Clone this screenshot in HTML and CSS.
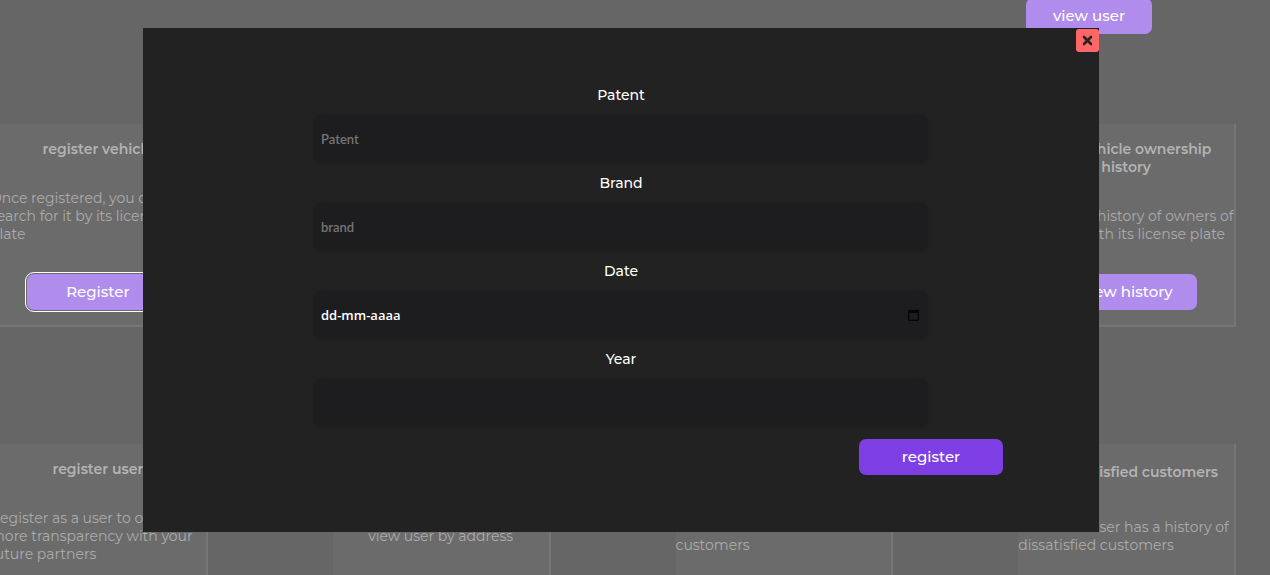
FILE: index.html
```html
<!DOCTYPE html>
<html lang="en">
<head>
<meta charset="utf-8">
<title>Vehicle register</title>
<link rel="stylesheet" href="styles.css">
</head>
<body>
<main class="page">
  <div class="top-actions">
    <button class="btn btn-faded btn-narrow" type="button">view user</button>
  </div>
  <section class="cards">
    <article class="card">
      <h2 class="card-title">register vehicle</h2>
      <p class="card-text card-text-wide">Once registered, you can<br>search for it by its license<br>plate</p>
      <button class="btn btn-faded btn-focused" type="button">Register</button>
    </article>
    <article class="card card-hidden"></article>
    <article class="card card-hidden"></article>
    <article class="card">
      <h2 class="card-title">View vehicle ownership<br>history</h2>
      <p class="card-text">Search the history of owners of a vehicle with its license plate</p>
      <button class="btn btn-faded" type="button">View history</button>
    </article>
  </section>
  <section class="cards">
    <article class="card">
      <h2 class="card-title">register user</h2>
      <p class="card-text">Register as a user to offer more transparency with your future partners</p>
      <button class="btn btn-faded" type="button">Register</button>
    </article>
    <article class="card">
      <h2 class="card-title">view user</h2>
      <p class="card-text">view user by address</p>
      <button class="btn btn-faded" type="button">view user</button>
    </article>
    <article class="card">
      <h2 class="card-title">satisfied customers</h2>
      <p class="card-text">View a user's list of satisfied customers</p>
      <button class="btn btn-faded" type="button">View</button>
    </article>
    <article class="card">
      <h2 class="card-title">All dissatisfied customers</h2>
      <p class="card-text">Check if a user has a history of dissatisfied customers</p>
      <button class="btn btn-faded" type="button">View</button>
    </article>
  </section>
</main>

<div class="overlay">
  <div class="modal" role="dialog" aria-label="Register vehicle">
    <button class="close" type="button" aria-label="Close">
      <svg width="11" height="11" viewBox="0 0 11 11" aria-hidden="true"><path d="M2 2 9 9M9 2 2 9" stroke="#222" stroke-width="2.6" stroke-linecap="round"/></svg>
    </button>
    <form class="form">
      <div class="field">
        <label for="patent">Patent</label>
        <input id="patent" type="text" placeholder="Patent">
      </div>
      <div class="field">
        <label for="brand">Brand</label>
        <input id="brand" type="text" placeholder="brand">
      </div>
      <div class="field">
        <label for="date">Date</label>
        <div class="date-box">
          <input id="date" class="date-input" type="text" placeholder="dd-mm-aaaa">
          <button class="date-button" type="button" aria-label="Choose date">
            <svg width="11" height="12" viewBox="0 0 11 12" aria-hidden="true"><path d="M0 2Q0 1 1 1H2V0H3V1H8V0H9V1H10Q11 1 11 2V11Q11 12 10 12H1Q0 12 0 11ZM1.3 4V10.7H9.7V4Z" fill="#050505" fill-rule="evenodd"/></svg>
          </button>
        </div>
      </div>
      <div class="field">
        <label for="year">Year</label>
        <input id="year" type="text">
      </div>
      <button class="btn submit" type="button">register</button>
    </form>
  </div>
</div>
</body>
</html>
```
FILE: styles.css
```css
* { box-sizing: border-box; }

body {
  margin: 0;
  overflow: hidden;
  background: #666;
  color: #fff;
  font: 14px/18px Montserrat, Inter, sans-serif;
}

.page {
  display: flex;
  flex-direction: column;
  height: 100vh;
  overflow: hidden;
}

.top-actions {
  display: flex;
  flex: none;
  justify-content: flex-end;
  margin: -2px 118px 90px 0;
}

.cards {
  display: grid;
  flex: none;
  grid-template-columns: repeat(4, minmax(0, 1fr));
  gap: 125px;
  margin: 0 34px 117px -10px;
}

.card {
  display: flex;
  flex-direction: column;
  align-items: center;
  justify-content: space-around;
  min-height: 203px;
  background: #6b6b6b;
  border: solid #767676;
  border-width: 0 2px 2px 0;
}

.card-hidden { visibility: hidden; }

.card-title {
  margin: 0;
  color: #b3b3b3;
  font-size: 14px;
  font-weight: 600;
  text-align: center;
}

.card-text {
  margin: 0;
  color: #ababab;
}

.card-text-wide { width: 100%; }

.btn {
  width: 144px;
  height: 36px;
  padding: 0;
  border: 0;
  border-radius: 7px;
  background: #7d3fe3;
  color: #fff;
  font: inherit;
  font-size: 15px;
  font-weight: 500;
}

.btn-faded {
  width: 142px;
  background: #b08ced;
}

.btn-narrow { width: 126px; }

.btn-focused {
  outline: 1px solid #fff;
  outline-offset: 1px;
}

.overlay {
  position: fixed;
  inset: 0;
  padding: 28px 171px 0 143px;
}

.modal {
  position: relative;
  background: #222;
}

.close {
  position: absolute;
  top: 1px;
  right: 0;
  display: grid;
  place-items: center;
  width: 23px;
  height: 23px;
  padding: 0;
  border: 0;
  border-radius: 3px;
  background: #ff6767;
}

.form {
  display: flex;
  flex-direction: column;
  padding: 57px 96px;
}

.field {
  display: flex;
  flex-direction: column;
  gap: 10px;
  margin-bottom: 10px;
  padding: 0 75px;
  text-align: center;
}

.field label {
  font-size: 14px;
  font-weight: 500;
  line-height: 20px;
}

.field input {
  width: 100%;
  height: 48px;
  padding: 0 7px;
  border: 0;
  border-radius: 8px;
  background: #1d1d1f;
  box-shadow: 0 0 3px #1d1d1f;
  color: #fff;
  font: 600 13px Lato, sans-serif;
}

.field .date-input { font-family: "Open Sans", sans-serif; }

.field input::placeholder { color: #757575; opacity: 1; }
.field .date-input::placeholder { color: #fff; }

.date-box { position: relative; }

.date-button {
  position: absolute;
  top: 18px;
  right: 9px;
  display: grid;
  padding: 0;
  border: 0;
  background: none;
}

.submit {
  align-self: flex-end;
  margin-top: 2px;
}
```
